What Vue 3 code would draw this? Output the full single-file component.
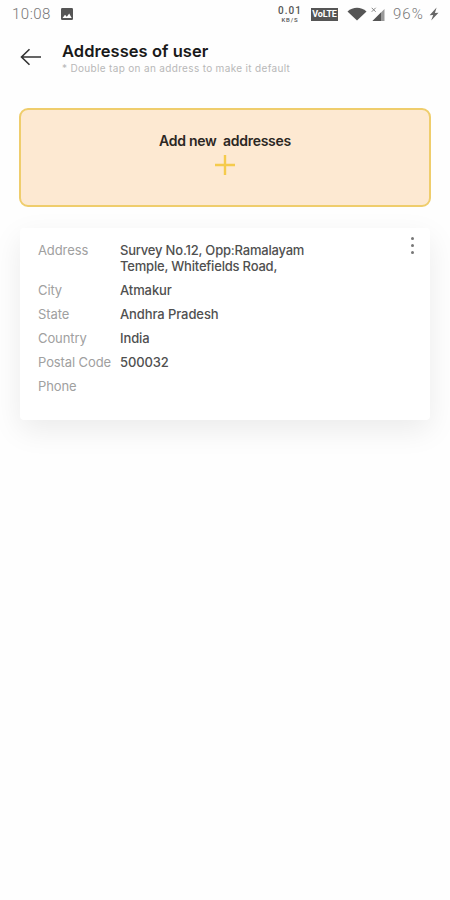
<template>
  <div class="screen">
    <!-- status bar -->
    <div class="status-bar">
      <span class="time">10:08</span>
      <svg class="photo-icon" viewBox="0 0 12 12">
        <rect width="12" height="12" rx="1.2" fill="#555" />
        <path d="M1.5 10 4 6.7l1.8 2L8.2 5.4 10.7 10z" fill="#fff" />
      </svg>

      <div class="speed">
        <span class="speed-value">0.01</span>
        <span class="speed-unit">KB/S</span>
      </div>
      <span class="volte">VoLTE</span>
      <svg class="wifi-icon" viewBox="0 0 20 14">
        <path d="M0.5 4.4C6 -0.4 14 -0.4 19.5 4.4L10 13.6z" fill="#555" />
      </svg>
      <svg class="signal-icon" viewBox="0 0 14 15">
        <path d="M13.5 2v12H1.5z" fill="#999" />
        <path d="M10 5.5V14H1.5z" fill="#555" />
        <path d="M0.7 0.8l4 4M4.7 0.8l-4 4" stroke="#777" stroke-width="0.9" />
      </svg>
      <span class="battery">96%</span>
      <svg class="bolt-icon" viewBox="0 0 10 14">
        <path d="M7.6 0.5 0.6 8.2l3.6-.2-2 5.5L9.5 5.8l-3.6.2z" fill="#666" />
      </svg>
    </div>

    <!-- header -->
    <header class="header">
      <button class="back" aria-label="Back">
        <svg viewBox="0 0 22 18">
          <path d="M21 9H1.5M9.5 1.2 1.5 9l8 7.8" fill="none" stroke="#333" stroke-width="1.6" />
        </svg>
      </button>
      <div class="heading">
        <h1>Addresses of user</h1>
        <p>* Double tap on an address to make it default</p>
      </div>
    </header>

    <main class="content">
      <button class="add-box">
        <span class="add-label">Add new&nbsp; addresses</span>
        <svg class="plus" viewBox="0 0 20 20">
          <path d="M10 0v20M0 10h20" stroke="#f5cb4c" stroke-width="2.4" />
        </svg>
      </button>

      <section class="card">
        <dl class="rows">
          <div v-for="row in rows" :key="row.label" class="row">
            <dt>{{ row.label }}</dt>
            <dd :class="row.type">{{ row.value }}</dd>
          </div>
        </dl>
        <button class="menu" aria-label="More">
          <i v-for="n in 3" :key="n"></i>
        </button>
      </section>
    </main>
  </div>
</template>

<script setup>
const rows = [
  { label: 'Address', value: 'Survey No.12, Opp:Ramalayam\nTemple, Whitefields Road,', type: 'street' },
  { label: 'City', value: 'Atmakur' },
  { label: 'State', value: 'Andhra Pradesh' },
  { label: 'Country', value: 'India' },
  { label: 'Postal Code', value: '500032' },
  { label: 'Phone', value: '' },
]
</script>

<style>
body {
  margin: 0;
  background: #fefefe;
}
</style>

<style scoped>
.screen {
  box-sizing: border-box;
  width: 450px;
  height: 900px;
  overflow: hidden;
  background: #fefefe;
  font-family: Inter, 'Liberation Sans', sans-serif;
}

button {
  padding: 0;
  border: 0;
  background: none;
  font: inherit;
  cursor: pointer;
}

svg {
  display: block;
  flex: none;
}

.status-bar {
  display: flex;
  align-items: center;
  height: 28px;
  padding: 0 10px 0 12px;
  color: #777;
  font-family: Roboto, sans-serif;
  font-weight: 300;
}

.time {
  width: 49px;
  font-size: 15px;
  letter-spacing: 0.5px;
}

.photo-icon {
  width: 12px;
  height: 12px;
}

.speed {
  display: flex;
  flex-direction: column;
  align-items: center;
  width: 24px;
  margin-left: 205px;
  color: #555;
  font-weight: 500;
}

.speed-value {
  font-size: 10px;
  line-height: 10px;
  letter-spacing: 1px;
}

.speed-unit {
  font-size: 6px;
  line-height: 7px;
  letter-spacing: 0.9px;
}

.volte {
  width: 27px;
  height: 13px;
  margin-left: 9px;
  background: #555;
  color: #fff;
  font-size: 9px;
  font-weight: 700;
  line-height: 13px;
  text-align: center;
  letter-spacing: -0.2px;
}

.wifi-icon {
  width: 20px;
  height: 14px;
  margin-left: 9px;
}

.signal-icon {
  width: 14px;
  height: 15px;
  margin-left: 4px;
}

.battery {
  width: 32px;
  margin-left: 8px;
  font-size: 15px;
  letter-spacing: 1px;
}

.bolt-icon {
  width: 10px;
  height: 14px;
  margin-left: 4px;
}

.header {
  display: flex;
  height: 64px;
  padding: 12px 20px 4px;
}

.back {
  width: 22px;
  height: 18px;
  margin-top: 8px;
}

.back svg {
  width: 22px;
  height: 18px;
}

.heading {
  margin-left: 20px;
}

h1 {
  margin: 0;
  color: #191919;
  font-size: 16.5px;
  font-weight: 600;
  line-height: 22px;
  letter-spacing: 0.05px;
}

.heading p {
  margin: 0;
  color: #b8b8b8;
  font-size: 10px;
  line-height: 13px;
  letter-spacing: 0.33px;
  white-space: nowrap;
}

.content {
  padding: 0 19px;
}

.add-box {
  display: flex;
  flex-direction: column;
  align-items: center;
  box-sizing: border-box;
  width: 412px;
  height: 99px;
  padding-top: 22px;
  border: 2px solid #efcd6c;
  border-radius: 9px;
  background: #fde9d2;
}

.add-label {
  color: #2b2723;
  font-size: 14px;
  font-weight: 600;
  line-height: 18px;
  letter-spacing: -0.28px;
}

.plus {
  width: 20px;
  height: 20px;
  margin-top: 5px;
}

.card {
  display: flex;
  justify-content: space-between;
  box-sizing: border-box;
  height: 192px;
  margin: 21px 1px 0;
  padding: 14px 16px 0 18px;
  border-radius: 4px;
  background: #fff;
  box-shadow: 0 10px 30px rgba(0, 0, 0, 0.08);
}

.rows {
  display: flex;
  flex-direction: column;
  gap: 8px;
  margin: 0;
  font-size: 13px;
  line-height: 16px;
}

.row {
  display: flex;
}

dt {
  width: 82px;
  color: #a0a0a0;
  letter-spacing: -0.1px;
  white-space: nowrap;
}

dd {
  margin: 0;
  color: #505050;
  font-weight: 500;
  letter-spacing: -0.1px;
}

.street {
  letter-spacing: -0.2px;
  white-space: pre;
}

.menu {
  display: flex;
  flex-direction: column;
  align-items: center;
  gap: 4px;
  height: 18px;
  margin-top: -5px;
}

.menu i {
  width: 3px;
  height: 3px;
  border-radius: 50%;
  background: #777;
}
</style>
